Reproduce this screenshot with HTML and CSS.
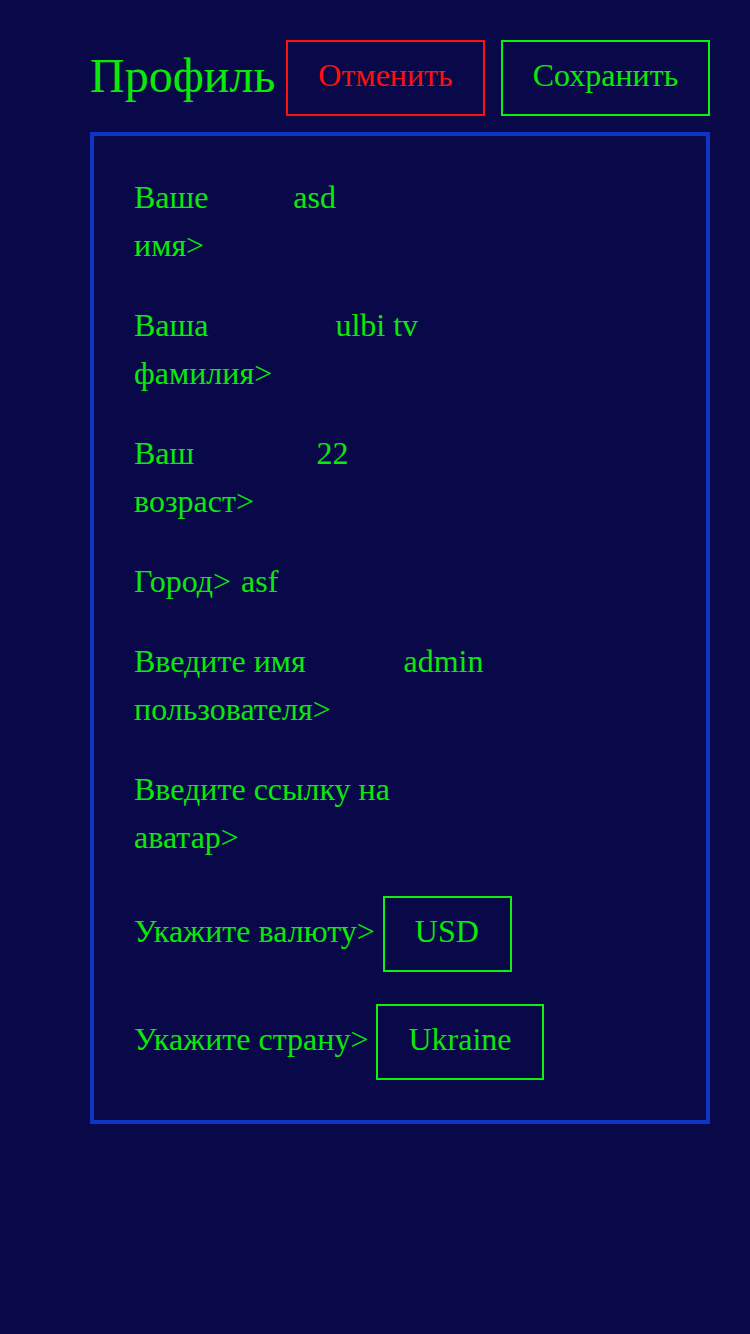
FILE: index.html
```html
<!DOCTYPE html>
<html lang="ru">
<head>
<meta charset="utf-8">
<title>Профиль</title>
<link rel="stylesheet" href="styles.css">
</head>
<body>
<div class="page">
  <header class="header">
    <h1 class="title">Профиль</h1>
    <button class="btn btn-cancel">Отменить</button>
    <button class="btn btn-save">Сохранить</button>
  </header>
  <section class="card">
    <div class="field">
      <span class="label">Ваше имя&gt;</span>
      <input class="input" value="asd">
    </div>
    <div class="field">
      <span class="label">Ваша фамилия&gt;</span>
      <input class="input" value="ulbi tv">
    </div>
    <div class="field">
      <span class="label">Ваш возраст&gt;</span>
      <input class="input" value="22">
    </div>
    <div class="field">
      <span class="label">Город&gt;</span>
      <input class="input" value="asf">
    </div>
    <div class="field">
      <span class="label">Введите имя пользователя&gt;</span>
      <input class="input" value="admin">
    </div>
    <div class="field">
      <span class="label">Введите ссылку на аватар&gt;</span>
      <input class="input" value="">
    </div>
    <div class="field field-select">
      <span class="label label-nowrap">Укажите валюту&gt;</span>
      <select class="select"><option>USD</option></select>
    </div>
    <div class="field field-select">
      <span class="label label-nowrap">Укажите страну&gt;</span>
      <select class="select"><option>Ukraine</option></select>
    </div>
  </section>
</div>
</body>
</html>
```
FILE: styles.css
```css
html, body {
  margin: 0;
  padding: 0;
  background: #090848;
  min-height: 100%;
}
body {
  font-family: "Liberation Serif", "Times New Roman", serif;
  color: #0be80b;
}
.page {
  padding: 40px 40px 40px 90px;
}
.header {
  display: flex;
  align-items: center;
  gap: 16px;
  margin-bottom: 16px;
}
.title {
  margin: 0 -5px 4px 0;
  font-size: 48px;
  font-weight: normal;
  line-height: 56px;
  color: #0be80b;
}
.btn {
  font-family: inherit;
  font-size: 32px;
  line-height: 48px;
  padding: 9px 30px 15px;
  background: transparent;
  border: 2px solid;
  cursor: pointer;
}
.btn-cancel {
  color: #ff0f0f;
  border-color: #ff0f0f;
}
.btn-save {
  color: #0be80b;
  border-color: #10f010;
}
.card {
  border: 4px solid #0c35c8;
  padding: 40px;
  display: flex;
  flex-direction: column;
  gap: 32px;
}
.field {
  display: flex;
  align-items: flex-start;
  font-size: 32px;
  line-height: 48px;
}
.label {
  flex: 0 1 auto;
  margin: -3px 0 3px;
}
.label-nowrap {
  white-space: nowrap;
}
.input {
  flex: 0 1 auto;
  width: 381px;
  min-width: 0;
  padding: 0 0 0 10px;
  margin: -3px 0 3px;
  border: none;
  outline: none;
  background: transparent;
  color: #0be80b;
  font-family: inherit;
  font-size: 32px;
  line-height: 48px;
  height: 48px;
}
.field-select {
  align-items: center;
  gap: 8px;
}
.select {
  -webkit-appearance: none;
  appearance: none;
  font-family: inherit;
  font-size: 32px;
  line-height: 48px;
  padding: 9px 30px 15px;
  margin: 0;
  background: transparent;
  color: #0be80b;
  border: 2px solid #10f010;
  border-radius: 0;
}
.select option {
  background: #090848;
}
```
